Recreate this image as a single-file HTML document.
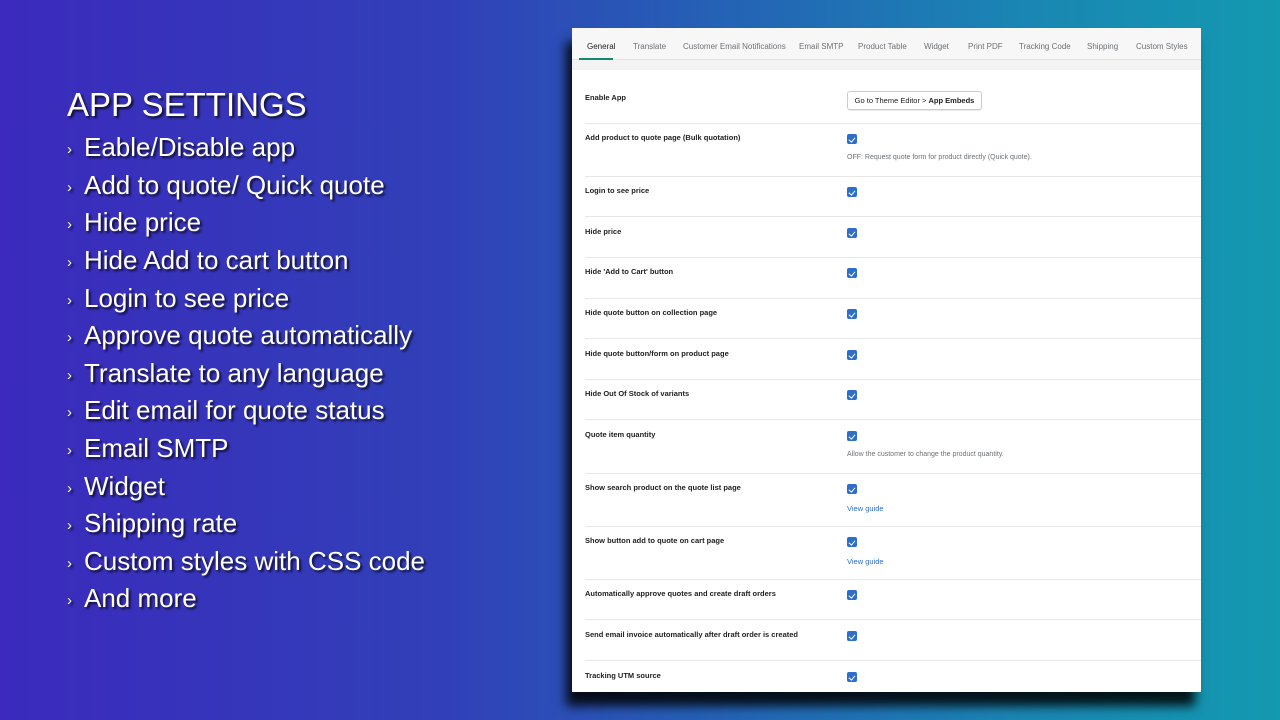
<!DOCTYPE html>
<html><head><meta charset="utf-8"><style>
*{margin:0;padding:0;box-sizing:border-box}
body{width:1280px;height:720px;overflow:hidden;position:relative;background:linear-gradient(90deg,#3b2abd 0%,#3140b8 35%,#2560b5 55%,#1a86b3 80%,#1399b0 100%);font-family:"Liberation Sans",sans-serif}
.l{position:absolute;left:0;top:0;color:#fff;text-shadow:2px 2px 2px rgba(0,0,0,.75)}
.h{position:absolute;left:67px;top:86px;font-size:33px;white-space:nowrap}
.it{position:absolute;left:84px;font-size:26px;white-space:nowrap}
.ch{position:absolute;left:67px;font-size:15px}
.panel{position:absolute;left:572px;top:28px;width:629px;height:664px;background:#fff;box-shadow:-6px 14px 10px rgba(0,0,0,.85);overflow:hidden}
.tabs{position:absolute;left:0;top:0;width:629px;height:32px;background:#f7f7f8;border-bottom:1px solid #e3e3e3}
.band{position:absolute;left:0;top:32px;width:629px;height:10px;background:#f3f3f4}
.tab{position:absolute;top:14px;font-size:8px;color:#6d7175;white-space:nowrap}
.ul{position:absolute;left:7px;top:30px;width:34px;height:2px;background:#138a6b}
.lab{position:absolute;left:13px;font-size:7.5px;font-weight:bold;color:#202223;white-space:nowrap}
.cb{position:absolute;left:275px;width:10px;height:10px;background:#2c6ecb;border-radius:2px}
.cb:after{content:"";position:absolute;left:3px;top:1.5px;width:2.5px;height:5px;border:solid #fff;border-width:0 1.2px 1.2px 0;transform:rotate(40deg)}
.sub{position:absolute;left:275px;font-size:7px;color:#6d7175;white-space:nowrap}
.lnk{position:absolute;left:275px;font-size:7.5px;color:#2c6ecb}
.dv{position:absolute;left:13px;width:616px;height:1px;background:#e8e8e8}
.btn{position:absolute;left:275px;top:63px;width:135px;height:19px;border:1px solid #c9cccf;border-radius:3px;font-size:7.5px;color:#202223;text-align:center;line-height:17px;box-shadow:0 1px 0 rgba(0,0,0,.08)}
</style></head><body>
<div class="l">
<div class="h">APP SETTINGS</div>
<div class="ch" style="top:141px">›</div><div class="it" style="top:132px">Eable/Disable app</div>
<div class="ch" style="top:179px">›</div><div class="it" style="top:170px">Add to quote/ Quick quote</div>
<div class="ch" style="top:216px">›</div><div class="it" style="top:207px">Hide price</div>
<div class="ch" style="top:254px">›</div><div class="it" style="top:245px">Hide Add to cart button</div>
<div class="ch" style="top:292px">›</div><div class="it" style="top:283px">Login to see price</div>
<div class="ch" style="top:329px">›</div><div class="it" style="top:320px">Approve quote automatically</div>
<div class="ch" style="top:367px">›</div><div class="it" style="top:358px">Translate to any language</div>
<div class="ch" style="top:404px">›</div><div class="it" style="top:395px">Edit email for quote status</div>
<div class="ch" style="top:442px">›</div><div class="it" style="top:433px">Email SMTP</div>
<div class="ch" style="top:480px">›</div><div class="it" style="top:471px">Widget</div>
<div class="ch" style="top:517px">›</div><div class="it" style="top:508px">Shipping rate</div>
<div class="ch" style="top:555px">›</div><div class="it" style="top:546px">Custom styles with CSS code</div>
<div class="ch" style="top:592px">›</div><div class="it" style="top:583px">And more</div>
</div>
<div class="panel">
<div class="tabs"></div><div class="band"></div>
<div class="tab" style="left:15px;color:#202223">General</div>
<div class="tab" style="left:61px">Translate</div>
<div class="tab" style="left:111px">Customer Email Notifications</div>
<div class="tab" style="left:227px">Email SMTP</div>
<div class="tab" style="left:286px">Product Table</div>
<div class="tab" style="left:352px">Widget</div>
<div class="tab" style="left:396px">Print PDF</div>
<div class="tab" style="left:447px">Tracking Code</div>
<div class="tab" style="left:515px">Shipping</div>
<div class="tab" style="left:564px">Custom Styles</div>
<div class="ul"></div>

<div class="lab" style="top:65px">Enable App</div>
<div class="btn">Go to Theme Editor &gt; <b>App Embeds</b></div>
<div class="dv" style="top:95px"></div>

<div class="lab" style="top:105px">Add product to quote page (Bulk quotation)</div>
<div class="cb" style="top:106px"></div>
<div class="sub" style="top:126px">OFF: Request quote form for product directly (Quick quote).</div>
<div class="dv" style="top:148px"></div>

<div class="lab" style="top:158px">Login to see price</div><div class="cb" style="top:159px"></div>
<div class="dv" style="top:188px"></div>
<div class="lab" style="top:199px">Hide price</div><div class="cb" style="top:200px"></div>
<div class="dv" style="top:229px"></div>
<div class="lab" style="top:239px">Hide 'Add to Cart' button</div><div class="cb" style="top:240px"></div>
<div class="dv" style="top:270px"></div>
<div class="lab" style="top:280px">Hide quote button on collection page</div><div class="cb" style="top:281px"></div>
<div class="dv" style="top:310px"></div>
<div class="lab" style="top:321px">Hide quote button/form on product page</div><div class="cb" style="top:322px"></div>
<div class="dv" style="top:351px"></div>
<div class="lab" style="top:361px">Hide Out Of Stock of variants</div><div class="cb" style="top:362px"></div>
<div class="dv" style="top:391px"></div>
<div class="lab" style="top:402px">Quote item quantity</div><div class="cb" style="top:403px"></div>
<div class="sub" style="top:423px">Allow the customer to change the product quantity.</div>
<div class="dv" style="top:445px"></div>
<div class="lab" style="top:455px">Show search product on the quote list page</div><div class="cb" style="top:456px"></div>
<div class="lnk" style="top:476px">View guide</div>
<div class="dv" style="top:498px"></div>
<div class="lab" style="top:508px">Show button add to quote on cart page</div><div class="cb" style="top:509px"></div>
<div class="lnk" style="top:529px">View guide</div>
<div class="dv" style="top:551px"></div>
<div class="lab" style="top:561px">Automatically approve quotes and create draft orders</div><div class="cb" style="top:562px"></div>
<div class="dv" style="top:591px"></div>
<div class="lab" style="top:602px">Send email invoice automatically after draft order is created</div><div class="cb" style="top:603px"></div>
<div class="dv" style="top:632px"></div>
<div class="lab" style="top:643px">Tracking UTM source</div><div class="cb" style="top:644px"></div>
</div>
</body></html>
